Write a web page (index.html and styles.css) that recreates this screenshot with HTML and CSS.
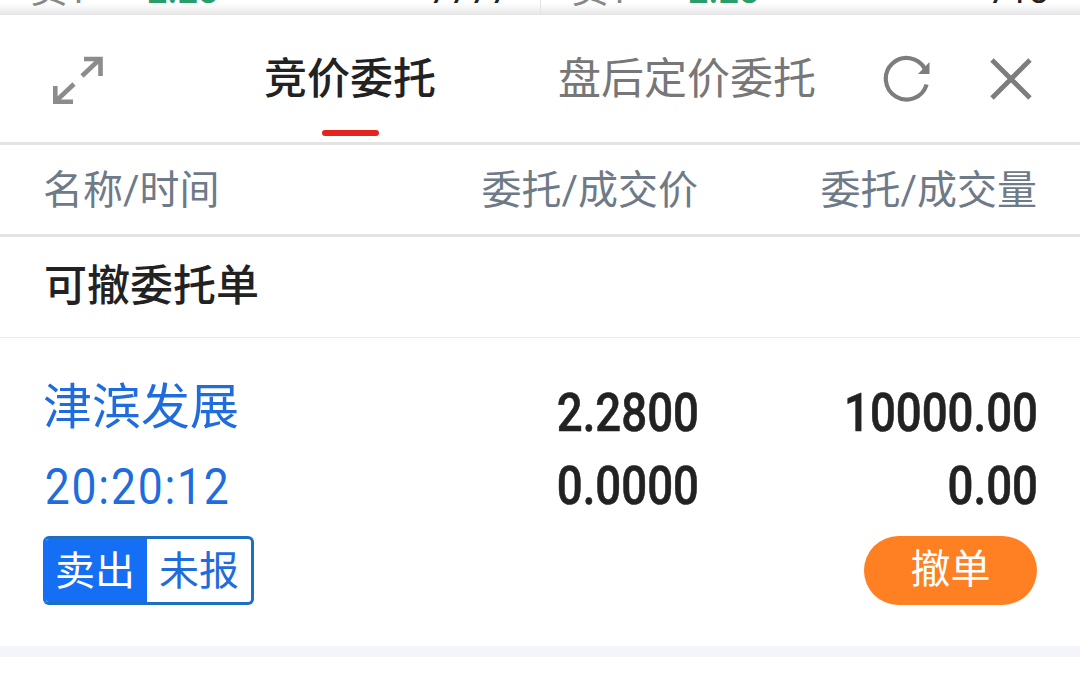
FILE: index.html
```
<!DOCTYPE html>
<html lang="zh-CN">
  <head>
    <meta charset="utf-8">
    <meta name="viewport" content="width=device-width, initial-scale=1">
    <title>竞价委托</title>
    <link rel="stylesheet" href="styles.css">
  </head>
  <body>
    <div class="quotes">
      <div class="quote"><span class="level">卖1</span><span class="up">2.28</span><span class="amount">7777</span></div>
      <div class="quote"><span class="level">卖1</span><span class="up">2.28</span><span class="amount">718</span></div>
    </div>
    <header class="tabs">
      <svg class="expand" viewBox="0 0 54 52" fill="none" stroke="#8c8c8c" stroke-width="4.6">
        <path d="M31 22L49 5M33 5H49.5V22M23 30L5 47M4.3 32V47.7H22"/>
      </svg>
      <div class="tab active">竞价委托</div>
      <div class="tab">盘后定价委托</div>
      <svg class="refresh" viewBox="0 0 50 50">
        <path d="M43.6 30.5A20.8 20.8 0 1 1 42 15" fill="none" stroke="#7d7d7d" stroke-width="4.2"/>
        <path d="M46.5 8V20H35Z" fill="#7d7d7d"/>
      </svg>
      <svg class="close" viewBox="0 0 42 42" fill="none" stroke="#7d7d7d" stroke-width="4.8">
        <path d="M2 2L40 40M40 2L2 40"/>
      </svg>
    </header>
    <div class="columns">
      <span>名称/时间</span>
      <span>委托/成交价</span>
      <span>委托/成交量</span>
    </div>
    <h2>可撤委托单</h2>
    <div class="order">
      <div class="info">
        <div class="name">津滨发展</div>
        <div class="time">20:20:12</div>
        <div class="status"><span class="side">卖出</span><span class="state">未报</span></div>
      </div>
      <div class="numbers">
        <div>2.2800</div>
        <div>0.0000</div>
      </div>
      <div class="numbers">
        <div>10000.00</div>
        <div>0.00</div>
        <button>撤单</button>
      </div>
    </div>
  </body>
</html>
```

FILE: styles.css
```
* {
  box-sizing: border-box;
}
body {
  margin: 0;
  height: 683px;
  overflow: hidden;
  background: #fff;
  color: #222;
  font-family: Roboto, "Noto Sans CJK SC", sans-serif;
}
.quotes {
  display: flex;
  height: 15px;
  overflow: hidden;
  background: linear-gradient(#fff 3px, #f5f5f5 8px, #e3e3e3 15px);
}
.quote {
  display: flex;
  width: 540px;
  height: 44px;
  margin-top: -31px;
  padding: 0 30px 0 30px;
  line-height: 44px;
  font-size: 36px;
}
.quote + .quote {
  padding-right: 31px;
  border-left: 1px solid #e3e3e3;
}
.level {
  width: 117px;
  color: #888;
  font-size: 37px;
}
.up {
  color: #299e6b;
  font-weight: 500;
}
.amount {
  margin-left: auto;
}
.tabs {
  display: flex;
  height: 130px;
  border-bottom: 3px solid #e3e3e3;
}
.expand {
  width: 54px;
  height: 52px;
  margin: 39px 158px 0 51px;
}
.tab {
  display: flex;
  flex-direction: column;
  align-items: center;
  width: 174px;
  height: 122px;
  padding-top: 33px;
  line-height: 62px;
  font-size: 43px;
  color: #777;
  white-space: nowrap;
}
.tab + .tab {
  width: 258px;
  margin-left: 121px;
}
.active {
  color: #222;
  font-weight: 500;
}
.active::after {
  content: "";
  width: 57px;
  height: 6px;
  margin-top: 20px;
  border-radius: 3px;
  background: #e52420;
}
.refresh {
  width: 50px;
  height: 50px;
  margin: 39px 0 0 67px;
}
.close {
  width: 42px;
  height: 42px;
  margin: 43px 0 0 57px;
}
.columns {
  display: grid;
  grid-template-columns: 341px 314px 1fr;
  height: 92px;
  padding: 0 43px;
  border-bottom: 3px solid #e3e3e3;
  line-height: 92px;
  font-size: 40px;
  color: #6e7a87;
}
.columns span + span {
  text-align: right;
}
h2 {
  height: 101px;
  margin: 0;
  padding-left: 44px;
  border-bottom: 1px solid #ebebeb;
  line-height: 99px;
  font-size: 43px;
  font-weight: 500;
}
.order {
  display: grid;
  grid-template-columns: 341px 314px 1fr;
  height: 319px;
  padding: 0 43px;
  border-bottom: 11px solid #f4f5fa;
}
.info {
  color: #1f6cdc;
}
.name {
  padding-top: 35px;
  line-height: 70px;
  font-size: 49px;
}
.time {
  padding: 10px 0 0 2px;
  line-height: 68px;
  font-size: 50px;
  letter-spacing: 2px;
  transform: scaleX(.89);
  transform-origin: left;
}
.status {
  display: flex;
  width: 211px;
  height: 69px;
  margin-top: 15px;
  border: 3px solid #1d6fc3;
  border-left-color: #146ff5;
  border-radius: 6px;
  overflow: hidden;
  line-height: 65px;
  font-size: 40px;
}
.side {
  width: 101px;
  padding-left: 9px;
  background: #146ff5;
  color: #fff;
}
.state {
  padding-left: 12px;
}
.numbers {
  padding-top: 39px;
  text-align: right;
  font-size: 53px;
  font-weight: 500;
}
.numbers div {
  height: 73px;
  line-height: 73px;
  margin-right: -1px;
  transform: scaleX(.86);
  transform-origin: right;
  -webkit-text-stroke: .6px #222;
}
button {
  display: block;
  width: 173px;
  height: 69px;
  margin: 13px 0 0 auto;
  padding: 0 0 9px;
  border: none;
  border-radius: 35px;
  background: #ff7f23;
  color: #fff;
  font: 40px Roboto, "Noto Sans CJK SC", sans-serif;
}
```
